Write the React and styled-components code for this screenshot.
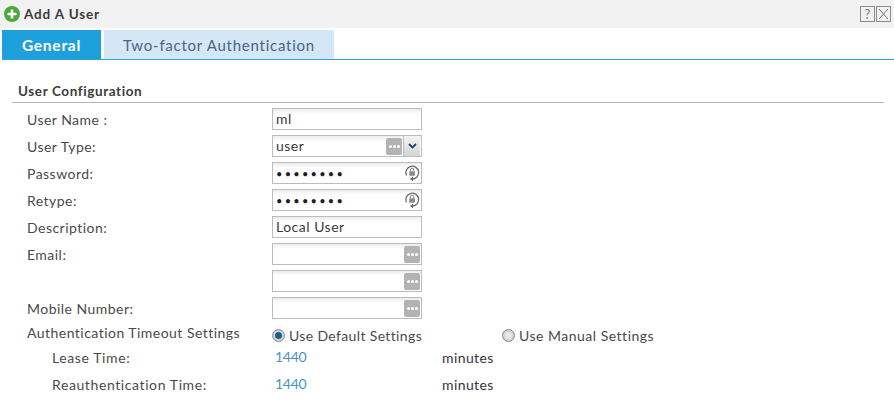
import React from "react";
import styled, { createGlobalStyle } from "styled-components";

const GlobalStyle = createGlobalStyle`
    html, body {
        margin: 0;
        padding: 0;
        background: #fff;
    }
    body {
        width: 894px;
        height: 408px;
        overflow: hidden;
        font-family: "Lato", "Open Sans", "Liberation Sans", sans-serif;
        font-size: 14px;
        color: #3c3c3c;
    }
`;

const Page = styled.div`
    width: 894px;
    height: 408px;
`;

const TitleBar = styled.div`
    display: flex;
    align-items: center;
    height: 28px;
    padding: 0 3px 0 4px;
    background: #f2f2f2;
`;

const Title = styled.h1`
    flex: 1;
    margin: 0 0 0 4px;
    font-size: 13.5px;
    font-weight: 700;
    color: #3a3a3a;
    letter-spacing: 0.85px;
`;

const TitleButton = styled.span`
    display: flex;
    align-items: center;
    justify-content: center;
    box-sizing: border-box;
    width: 15px;
    height: 16px;
    margin-left: 1px;
    border: 1px solid #8a8a8a;
    color: #777;
    font-size: 13px;
`;

const Tabs = styled.div`
    display: flex;
    gap: 3px;
    height: 29px;
    margin: 2px 0 0 2px;
    border-bottom: 1px solid #2aa5d6;
`;

const Tab = styled.div`
    display: flex;
    align-items: center;
    justify-content: center;
    width: ${props => props.$width}px;
    background: ${props => props.$active ? "#1ea0dc" : "#d3e7f6"};
    color: ${props => props.$active ? "#fff" : "#4a6484"};
    font-size: ${props => props.$active ? 15.5 : 15}px;
    font-weight: ${props => props.$active ? 700 : 400};
    letter-spacing: ${props => props.$active ? "0.75px" : "0.75px"};
`;

const Section = styled.h2`
    box-sizing: border-box;
    height: 23px;
    margin: 20px 10px 0 12px;
    padding: 3px 0 0 6px;
    border-bottom: 1px solid #b4b4b4;
    font-size: 13.5px;
    font-weight: 700;
    color: #3c3c3c;
    letter-spacing: 0.6px;
`;

const Form = styled.div`
    display: flex;
    flex-direction: column;
    margin-top: 5px;
`;

const Row = styled.div`
    display: grid;
    grid-template-columns: 245px 170px 60px auto;
    align-items: center;
    height: ${props => props.$height || 27}px;
    padding-left: 27px;
`;

const Label = styled.label`
    padding-left: ${props => props.$indent ? 25 : 0}px;
    padding-bottom: 5px;
    font-size: 14px;
    letter-spacing: ${props => props.$indent ? "0.6px" : "0.47px"};
    color: #4a4a4a;
`;

const Field = styled.div`
    display: flex;
    align-items: center;
    box-sizing: border-box;
    width: 150px;
    height: 22px;
    margin-bottom: 5px;
    padding: 0 1px 0 3px;
    border: 1px solid #b9bcc2;
    background: linear-gradient(#ececec, #fff 5px);
    font-size: 14px;
    letter-spacing: 0.5px;
    color: #3a3a3a;
`;

const FieldText = styled.span`
    flex: 1;
    padding-bottom: 1px;
`;

const Dots = styled.span`
    flex: 1;
    font-size: 11px;
    letter-spacing: 2.25px;
    color: #1c1c2a;
`;

const MoreButton = styled.span`
    display: flex;
    align-items: center;
    justify-content: center;
    gap: 1px;
    width: 16px;
    height: 17px;
    border-radius: 2px;
    background: #b3b3b3;
`;

const MoreDot = styled.i`
    width: 3px;
    height: 3px;
    border-radius: 50%;
    background: #fff;
`;

const SelectArrow = styled.span`
    display: flex;
    align-items: center;
    justify-content: center;
    align-self: stretch;
    width: 16px;
    margin-left: 1px;
    border-left: 1px solid #b9bcc2;
    background: linear-gradient(#f4f4f4, #d4d4d4);
`;

const Radio = styled.label`
    display: flex;
    align-items: center;
    gap: 4px;
    white-space: nowrap;
    font-size: 14px;
    letter-spacing: ${props => props.$wide ? "0.5px" : "0.36px"};
    color: #4a4a4a;
`;

const RadioMark = styled.span`
    display: flex;
    align-items: center;
    justify-content: center;
    box-sizing: border-box;
    width: 13px;
    height: 13px;
    border: 1px solid #8d8d8d;
    border-radius: 50%;
    background: radial-gradient(circle, #e8e8e8 30%, #b5b5b5 100%);
`;

const RadioDot = styled.span`
    width: 7px;
    height: 7px;
    border-radius: 50%;
    background: #14618f;
`;

const Value = styled.span`
    padding: 0 0 6px 3px;
    color: #4a93c4;
    font-size: 14px;
    letter-spacing: -0.3px;
`;

const Unit = styled.span`
    padding-bottom: 4px;
    font-size: 14px;
    letter-spacing: 0.4px;
    color: #3a3040;
`;

const PlusIcon = () => (
    <svg width="16" height="16" viewBox="0 0 16 16">
        <circle cx="8" cy="8" r="8" fill="#4aa83a" />
        <path d="M8 3.5v9M3.5 8h9" stroke="#fff" strokeWidth="2.6" />
    </svg>
);

const ChevronIcon = () => (
    <svg width="9" height="6" viewBox="0 0 9 6">
        <path d="M1 1l3.5 3.5L8 1" fill="none" stroke="#2c3e66" strokeWidth="1.8" />
    </svg>
);

const CloseIcon = () => (
    <svg width="11" height="12" viewBox="0 0 11 12">
        <path d="M1 1l9 10M10 1L1 11" fill="none" stroke="#777" strokeWidth="1" />
    </svg>
);

const ResetIcon = () => (
    <svg width="16" height="18" viewBox="0 0 16 18">
        <path d="M8.5 15a6.4 6.4 0 1 0-6-3.6" fill="none" stroke="#6a6a6a" strokeWidth="1.3" />
        <path d="M9 12.6v4.6L5.8 15z" fill="#6a6a6a" />
        <rect x="5.2" y="7.2" width="5.8" height="4.6" rx="0.8" fill="#8a8a8a" />
        <path d="M6.4 7.2V6a1.7 1.7 0 0 1 3.4 0v1.2" fill="none" stroke="#8a8a8a" strokeWidth="1.1" />
    </svg>
);

const More = () => (
    <MoreButton>
        <MoreDot />
        <MoreDot />
        <MoreDot />
    </MoreButton>
);

const PasswordField = () => (
    <Field>
        <Dots>••••••••</Dots>
        <ResetIcon />
    </Field>
);

const App = () => (
    <Page>
        <GlobalStyle />
        <TitleBar>
            <PlusIcon />
            <Title>Add A User</Title>
            <TitleButton>?</TitleButton>
            <TitleButton><CloseIcon /></TitleButton>
        </TitleBar>
        <Tabs>
            <Tab $active $width={99}>General</Tab>
            <Tab $width={230}>Two-factor Authentication</Tab>
        </Tabs>
        <Section>User Configuration</Section>
        <Form>
            <Row>
                <Label>User Name :</Label>
                <Field><FieldText>ml</FieldText></Field>
            </Row>
            <Row>
                <Label>User Type:</Label>
                <Field>
                    <FieldText>user</FieldText>
                    <More />
                    <SelectArrow><ChevronIcon /></SelectArrow>
                </Field>
            </Row>
            <Row>
                <Label>Password:</Label>
                <PasswordField />
            </Row>
            <Row>
                <Label>Retype:</Label>
                <PasswordField />
            </Row>
            <Row>
                <Label>Description:</Label>
                <Field><FieldText>Local User</FieldText></Field>
            </Row>
            <Row>
                <Label>Email:</Label>
                <Field><FieldText /><More /></Field>
            </Row>
            <Row>
                <Label />
                <Field><FieldText /><More /></Field>
            </Row>
            <Row>
                <Label>Mobile Number:</Label>
                <Field><FieldText /><More /></Field>
            </Row>
            <Row $height={22}>
                <Label>Authentication Timeout Settings</Label>
                <Radio><RadioMark><RadioDot /></RadioMark>Use Default Settings</Radio>
                <span />
                <Radio $wide><RadioMark />Use Manual Settings</Radio>
            </Row>
            <Row>
                <Label $indent>Lease Time:</Label>
                <Value>1440</Value>
                <Unit>minutes</Unit>
            </Row>
            <Row>
                <Label $indent>Reauthentication Time:</Label>
                <Value>1440</Value>
                <Unit>minutes</Unit>
            </Row>
        </Form>
    </Page>
);

export default App;
